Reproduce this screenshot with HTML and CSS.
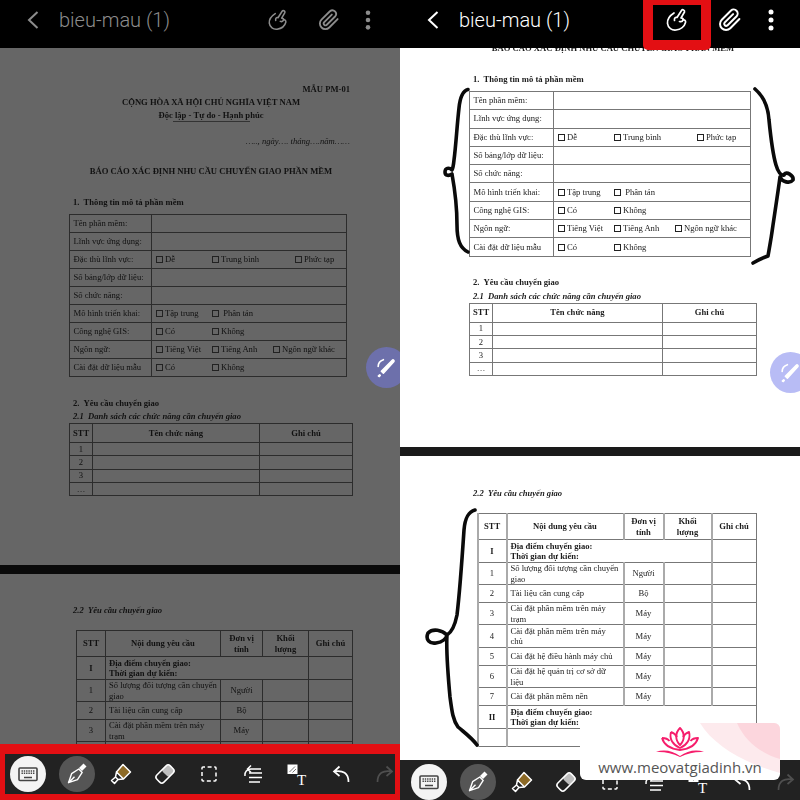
FILE: index.html
```html
<!DOCTYPE html>
<html>
<head>
  <meta charset="utf-8">
  <title>bieu-mau (1)</title>
  <link rel="stylesheet" href="styles.css">
</head>
<body>
  <svg class="sprite">
    <symbol id="i-back" viewBox="0 0 12 20"><path d="M10.5 2 L2 10 L10.5 18" fill="none" stroke="currentColor" stroke-width="2"/></symbol>
    <symbol id="i-hand" viewBox="0 0 24 24">
      <g fill="none" stroke="currentColor" stroke-width="1.7" stroke-linecap="round" stroke-linejoin="round">
        <path d="M9 5 C5 7.500 2 11 2.500 15.500 C3 20 7 22.500 11 22 C15.500 21.500 19.500 18.500 20.500 14.500 C21 12.500 19.500 11.500 18 12"/>
        <path d="M9.500 12.500 C9 10 10.500 9 12 9.500 L16.500 2.500 C17.500 1 20 2 19.500 4 L16 10 C18 10 18.500 11 18 12 C17.500 13.500 16 14 14.500 13.500"/>
      </g>
    </symbol>
    <symbol id="i-clip" viewBox="0 0 24 24"><path d="M21.4 11 L12.3 20.2 A6 6 0 0 1 3.8 11.7 L13 2.5 A4 4 0 0 1 18.6 8.2 L9.4 17.4 A2 2 0 0 1 6.6 14.6 L15.1 6.1" fill="none" stroke="currentColor" stroke-width="2" stroke-linecap="round"/></symbol>
    <symbol id="i-dots" viewBox="0 0 24 24"><circle cx="12" cy="4" r="2.5" fill="currentColor"/><circle cx="12" cy="12" r="2.5" fill="currentColor"/><circle cx="12" cy="20" r="2.5" fill="currentColor"/></symbol>
    <symbol id="i-keyboard" viewBox="0 0 24 24">
      <rect x="3" y="6" width="18" height="12.500" rx="1" fill="none" stroke="#444" stroke-width="1.6"/>
      <path d="M5.500 9 H18.500 M5.500 11.200 H18.500" stroke="#444" stroke-width="1.500" stroke-dasharray="1.400 .9"/>
      <path d="M8 15.500 H16" stroke="#444" stroke-width="1.500"/>
    </symbol>
    <symbol id="i-pen" viewBox="0 0 24 24">
      <path d="M15.500 7.500 L20 3" stroke="#fff" stroke-width="4.200"/>
      <path d="M13.800 7 L17.200 10.400 L12.500 17.600 L3.500 20.700 L6.600 11.700 Z M3.500 20.700 L9.500 14.700" fill="none" stroke="#fff" stroke-width="1.400" stroke-linejoin="round"/>
    </symbol>
    <symbol id="i-marker" viewBox="0 0 24 24">
      <path d="M14 2.500 L21.500 10 L14.500 16.500 L7.500 9.500 Z" fill="#8d6a26"/>
      <path d="M14 2.500 L21.500 10 L14.500 17 L7.500 10 Z M7.500 10 L6.500 15 L9 17.500 L14.500 17 M6.500 15 L2.500 18.500 L5.500 21.500 L9 17.500" fill="none" stroke="#fff" stroke-width="1.500" stroke-linejoin="round"/>
    </symbol>
    <symbol id="i-eraser" viewBox="0 0 24 24">
      <g transform="rotate(-45 12 12)">
        <rect x="12" y="7" width="9.500" height="10" rx="2" fill="#bdbdbd"/>
        <rect x="2.500" y="7" width="19" height="10" rx="3" fill="none" stroke="#fff" stroke-width="1.500"/>
      </g>
    </symbol>
    <symbol id="i-select" viewBox="0 0 24 24"><rect x="5" y="5" width="14" height="14" rx="1" fill="none" stroke="#fff" stroke-width="1.500" stroke-dasharray="4 2.600" stroke-dashoffset="2"/></symbol>
    <symbol id="i-align" viewBox="0 0 24 24">
      <path d="M8 11 H21 M8 15.500 H21 M8 20 H19" stroke="#fff" stroke-width="1.500"/>
      <path d="M4 14 C3.500 10 6 7 10 7 H20 M10 3.500 L6.500 7 L10 10.500" fill="none" stroke="#fff" stroke-width="1.500"/>
    </symbol>
    <symbol id="i-imgtext" viewBox="0 0 24 24">
      <rect x="2.500" y="2.500" width="10" height="9.500" fill="#fff"/>
      <path d="M4.500 10 L10 4.500 M7.500 10.500 L11 7" stroke="#777" stroke-width="1"/>
      <text x="12" y="22.500" class="icon-t">T</text>
    </symbol>
    <symbol id="i-undo" viewBox="0 0 24 24"><path d="M10.500 4.500 L5 9.500 L10.500 14 M5 9.500 C14 8 19.500 11 19.500 20" fill="none" stroke="currentColor" stroke-width="1.700"/></symbol>
    <symbol id="i-redo" viewBox="0 0 24 24"><path d="M13.500 4.500 L19 9.500 L13.500 14 M19 9.500 C10 8 4.500 11 4.500 20" fill="none" stroke="currentColor" stroke-width="1.700"/></symbol>
    <symbol id="i-sketch" viewBox="0 0 24 24">
      <path d="M9 17.500 L7 15.500 L17.500 5 C18.500 4 20 5.500 19 6.500 Z" fill="#fff" stroke="#fff" stroke-width="1.400" stroke-linejoin="round"/>
      <path d="M5.500 19.500 L4 21" stroke="#fff" stroke-width="2.400" stroke-linecap="round"/>
      <path d="M4 11 C4 8 6 5.500 9 4.500" fill="none" stroke="#fff" stroke-width="1.600" stroke-linecap="round"/>
    </symbol>
  </svg>

  <div class="screen">
    <!-- left phone: document dimmed -->
    <div class="pane pane-dim">
      <div class="topbar">
        <svg class="back"><use href="#i-back"/></svg>
        <span class="doc-title">bieu-mau (1)</span>
        <div class="actions">
          <svg class="action"><use href="#i-hand"/></svg>
          <svg class="action"><use href="#i-clip"/></svg>
          <svg class="action"><use href="#i-dots"/></svg>
        </div>
      </div>
      <div class="doc">
        <div class="page page-one">
          <p class="form-code">MẪU PM-01</p>
          <p class="nation">CỘNG HÒA XÃ HỘI CHỦ NGHĨA VIỆT NAM</p>
          <p class="motto">Độc lập - Tự do - Hạnh phúc</p>
          <div class="motto-line"></div>
          <p class="date">….., ngày…. tháng….năm……</p>
          <p class="report-title">BÁO CÁO XÁC ĐỊNH NHU CẦU CHUYỂN GIAO PHẦN MỀM</p>
          <p class="section section-first">1.&nbsp; Thông tin mô tả phần mềm</p>
          <table class="info-table">
            <col class="info-a"><col>
            <tr><td>Tên phần mềm:</td><td></td></tr>
            <tr><td>Lĩnh vực ứng dụng:</td><td></td></tr>
            <tr><td>Đặc thù lĩnh vực:</td><td><div class="opts"><span class="opt"><i class="box"></i>Dễ</span><span class="opt opt-wide"><i class="box"></i>Trung bình</span><span class="opt"><i class="box"></i>Phức tạp</span></div></td></tr>
            <tr><td>Số bảng/lớp dữ liệu:</td><td></td></tr>
            <tr><td>Số chức năng:</td><td></td></tr>
            <tr><td>Mô hình triển khai:</td><td><div class="opts"><span class="opt"><i class="box"></i>Tập trung</span><span class="opt"><i class="box"></i>&nbsp;Phân tán</span></div></td></tr>
            <tr><td>Công nghệ GIS:</td><td><div class="opts"><span class="opt"><i class="box"></i>Có</span><span class="opt"><i class="box"></i>Không</span></div></td></tr>
            <tr><td>Ngôn ngữ:</td><td><div class="opts"><span class="opt"><i class="box"></i>Tiếng Việt</span><span class="opt opt-lang"><i class="box"></i>Tiếng Anh</span><span class="opt"><i class="box"></i>Ngôn ngữ khác</span></div></td></tr>
            <tr><td>Cài đặt dữ liệu mẫu</td><td><div class="opts"><span class="opt"><i class="box"></i>Có</span><span class="opt"><i class="box"></i>Không</span></div></td></tr>
          </table>
          <p class="section section-second">2.&nbsp; Yêu cầu chuyển giao</p>
          <p class="subsection">2.1&nbsp; Danh sách các chức năng cần chuyển giao</p>
          <table class="func-table">
            <col class="func-a"><col class="func-b"><col>
            <tr class="head"><th>STT</th><th>Tên chức năng</th><th>Ghi chú</th></tr>
            <tr><td class="mid">1</td><td></td><td></td></tr>
            <tr><td class="mid">2</td><td></td><td></td></tr>
            <tr><td class="mid">3</td><td></td><td></td></tr>
            <tr><td class="mid">…</td><td></td><td></td></tr>
          </table>
        </div>
        <div class="page-gap"></div>
        <div class="page page-two">
          <p class="subsection">2.2&nbsp; Yêu cầu chuyển giao</p>
          <table class="req-table">
            <col class="req-a"><col class="req-b"><col class="req-c"><col class="req-d"><col>
            <tr class="r26"><th>STT</th><th>Nội dung yêu cầu</th><th>Đơn vị<br>tính</th><th>Khối<br>lượng</th><th>Ghi chú</th></tr>
            <tr class="r23"><th>I</th><th class="left" colspan="3">Địa điểm chuyển giao:<br>Thời gian dự kiến:</th><td></td></tr>
            <tr class="r22"><td class="mid">1</td><td>Số lượng đối tượng cần chuyển giao</td><td class="mid">Người</td><td></td><td></td></tr>
            <tr class="r18"><td class="mid">2</td><td>Tài liệu cần cung cấp</td><td class="mid">Bộ</td><td></td><td></td></tr>
            <tr class="r22"><td class="mid">3</td><td>Cài đặt phần mềm trên máy trạm</td><td class="mid">Máy</td><td></td><td></td></tr>
            <tr class="r23"><td class="mid">4</td><td>Cài đặt phần mềm trên máy chủ</td><td class="mid">Máy</td><td></td><td></td></tr>
          </table>
        </div>
      </div>
      <svg class="fab"><use href="#i-sketch"/></svg>
      <div class="toolbar">
        <span class="tool tool-keys"><svg><use href="#i-keyboard"/></svg></span>
        <span class="tool tool-on"><svg><use href="#i-pen"/></svg></span>
        <span class="tool"><svg><use href="#i-marker"/></svg></span>
        <span class="tool"><svg><use href="#i-eraser"/></svg></span>
        <span class="tool"><svg><use href="#i-select"/></svg></span>
        <span class="tool"><svg><use href="#i-align"/></svg></span>
        <span class="tool"><svg><use href="#i-imgtext"/></svg></span>
        <span class="tool"><svg><use href="#i-undo"/></svg></span>
        <span class="tool tool-off"><svg><use href="#i-redo"/></svg></span>
      </div>
    </div>

    <!-- right phone: document with pen marks -->
    <div class="pane pane-live">
      <div class="topbar">
        <svg class="back"><use href="#i-back"/></svg>
        <span class="doc-title">bieu-mau (1)</span>
        <div class="actions">
          <svg class="action"><use href="#i-hand"/></svg>
          <svg class="action"><use href="#i-clip"/></svg>
          <svg class="action"><use href="#i-dots"/></svg>
        </div>
      </div>
      <div class="doc">
        <div class="page page-one">
          <p class="report-title">BÁO CÁO XÁC ĐỊNH NHU CẦU CHUYỂN GIAO PHẦN MỀM</p>
          <p class="section section-first">1.&nbsp; Thông tin mô tả phần mềm</p>
          <table class="info-table">
            <col class="info-a"><col>
            <tr><td>Tên phần mềm:</td><td></td></tr>
            <tr><td>Lĩnh vực ứng dụng:</td><td></td></tr>
            <tr><td>Đặc thù lĩnh vực:</td><td><div class="opts"><span class="opt"><i class="box"></i>Dễ</span><span class="opt opt-wide"><i class="box"></i>Trung bình</span><span class="opt"><i class="box"></i>Phức tạp</span></div></td></tr>
            <tr><td>Số bảng/lớp dữ liệu:</td><td></td></tr>
            <tr><td>Số chức năng:</td><td></td></tr>
            <tr><td>Mô hình triển khai:</td><td><div class="opts"><span class="opt"><i class="box"></i>Tập trung</span><span class="opt"><i class="box"></i>&nbsp;Phân tán</span></div></td></tr>
            <tr><td>Công nghệ GIS:</td><td><div class="opts"><span class="opt"><i class="box"></i>Có</span><span class="opt"><i class="box"></i>Không</span></div></td></tr>
            <tr><td>Ngôn ngữ:</td><td><div class="opts"><span class="opt"><i class="box"></i>Tiếng Việt</span><span class="opt opt-lang"><i class="box"></i>Tiếng Anh</span><span class="opt"><i class="box"></i>Ngôn ngữ khác</span></div></td></tr>
            <tr><td>Cài đặt dữ liệu mẫu</td><td><div class="opts"><span class="opt"><i class="box"></i>Có</span><span class="opt"><i class="box"></i>Không</span></div></td></tr>
          </table>
          <p class="section section-second">2.&nbsp; Yêu cầu chuyển giao</p>
          <p class="subsection">2.1&nbsp; Danh sách các chức năng cần chuyển giao</p>
          <table class="func-table">
            <col class="func-a"><col class="func-b"><col>
            <tr class="head"><th>STT</th><th>Tên chức năng</th><th>Ghi chú</th></tr>
            <tr><td class="mid">1</td><td></td><td></td></tr>
            <tr><td class="mid">2</td><td></td><td></td></tr>
            <tr><td class="mid">3</td><td></td><td></td></tr>
            <tr><td class="mid">…</td><td></td><td></td></tr>
          </table>
        </div>
        <div class="page-gap"></div>
        <div class="page page-two">
          <p class="subsection">2.2&nbsp; Yêu cầu chuyển giao</p>
          <table class="req-table">
            <col class="req-a"><col class="req-b"><col class="req-c"><col class="req-d"><col>
            <tr class="r26"><th>STT</th><th>Nội dung yêu cầu</th><th>Đơn vị<br>tính</th><th>Khối<br>lượng</th><th>Ghi chú</th></tr>
            <tr class="r23"><th>I</th><th class="left" colspan="3">Địa điểm chuyển giao:<br>Thời gian dự kiến:</th><td></td></tr>
            <tr class="r22"><td class="mid">1</td><td>Số lượng đối tượng cần chuyển giao</td><td class="mid">Người</td><td></td><td></td></tr>
            <tr class="r18"><td class="mid">2</td><td>Tài liệu cần cung cấp</td><td class="mid">Bộ</td><td></td><td></td></tr>
            <tr class="r22"><td class="mid">3</td><td>Cài đặt phần mềm trên máy trạm</td><td class="mid">Máy</td><td></td><td></td></tr>
            <tr class="r23"><td class="mid">4</td><td>Cài đặt phần mềm trên máy chủ</td><td class="mid">Máy</td><td></td><td></td></tr>
            <tr class="r18"><td class="mid">5</td><td>Cài đặt hệ điều hành máy chủ</td><td class="mid">Máy</td><td></td><td></td></tr>
            <tr class="r22"><td class="mid">6</td><td>Cài đặt hệ quản trị cơ sở dữ liệu</td><td class="mid">Máy</td><td></td><td></td></tr>
            <tr class="r18"><td class="mid">7</td><td>Cài đặt phần mềm nền</td><td class="mid">Máy</td><td></td><td></td></tr>
            <tr class="r23"><th>II</th><th class="left" colspan="4">Địa điểm chuyển giao:<br>Thời gian dự kiến:</th></tr>
            <tr class="r18"><td></td><td colspan="4"></td></tr>
          </table>
        </div>
      </div>
      <svg class="marks" viewBox="0 0 400 800">
        <path d="M68 89.500 C62 91 60 98 59 108 C57 125 56 145 54 160 C53.500 165 53 168 52 170 C49 167 45 168 45 172 C45 176 49 176 52 174 C54 185 57 205 57 225 C57 240 60 248 68 252"/>
        <path d="M355 89 C362 95 368 105 369 120 C371 140 373 155 376 165 C378 172 381 176 384 175 C386 170 394 176 393 180 C390 184 382 182 380 177 C379 185 376 205 373 225 C371 240 369 250 368 256 C362 258 358 260 353 263"/>
        <path d="M75 510 C68 512 65 518 64 530 C62 560 60 590 57 615 C55 625 52 632 47 635 C42 630 33 628 28 633 C25 640 30 644 36 643 C42 642 46 640 47 635 C46 650 48 675 50 697 C52 712 53 720 58 727 C65 733 72 738 77 745"/>
      </svg>
      <svg class="fab"><use href="#i-sketch"/></svg>
      <div class="toolbar">
        <span class="tool tool-keys"><svg><use href="#i-keyboard"/></svg></span>
        <span class="tool tool-on"><svg><use href="#i-pen"/></svg></span>
        <span class="tool"><svg><use href="#i-marker"/></svg></span>
        <span class="tool"><svg><use href="#i-eraser"/></svg></span>
        <span class="tool"><svg><use href="#i-select"/></svg></span>
        <span class="tool"><svg><use href="#i-align"/></svg></span>
        <span class="tool"><svg><use href="#i-imgtext"/></svg></span>
        <span class="tool"><svg><use href="#i-undo"/></svg></span>
        <span class="tool tool-off"><svg><use href="#i-redo"/></svg></span>
      </div>
      <div class="watermark">
        <svg class="wm-arcs" viewBox="0 0 200 57">
          <path d="M120 0 H200 V50 C170 42 135 25 120 0 Z" fill="#fdeaed"/>
          <path d="M157 0 H200 V36 C180 30 165 18 157 0 Z" fill="#fcd6dd"/>
        </svg>
        <svg class="lotus" viewBox="0 0 48 30">
          <g fill="none" stroke="#f61e6c" stroke-width="1.900" stroke-linejoin="round">
            <path d="M24 1 C19 6 19 13 24 18 C29 13 29 6 24 1 Z"/>
            <path d="M15 5 C13 12 17 18 24 21 C31 18 35 12 33 5 C30 6 28 8 27 10 M15 5 C18 6 20 8 21 10"/>
            <path d="M6 11 C8 18 15 22 24 23 C33 22 40 18 42 11 C39 11 36 12 34.500 14 M6 11 C9 11 12 12 13.500 14"/>
          </g>
          <path d="M0 25 C8 22 17 24 24 29 C31 24 40 22 48 25 C40 24.500 32 26 24 30 C16 26 8 24.500 0 25 Z" fill="#f61e6c"/>
        </svg>
        <span class="wm-text">www.meovatgiadinh.vn</span>
      </div>
      <div class="call-out"></div>
    </div>
  </div>
</body>
</html>
```

FILE: styles.css
```css
body {
  margin: 0;
  background-color: #000;
  font-family: "Liberation Serif", serif;
}

p {
  margin: 0;
}

.sprite {
  display: none;
}

.screen {
  display: flex;
  width: 800px;
  height: 800px;
  overflow: hidden;
}

.pane {
  position: relative;
  display: flex;
  flex-direction: column;
  width: 400px;
  height: 800px;
  overflow: hidden;
}

/* top bar */
.topbar {
  display: flex;
  align-items: center;
  flex: none;
  height: 48px;
  padding: 0 17px 8px 27px;
  box-sizing: border-box;
  background-color: #000;
  color: #fff;
}

.back {
  width: 12px;
  height: 20px;
}

.doc-title {
  margin-left: 20px;
  font-family: Roboto, sans-serif;
  font-size: 20px;
  font-weight: 300;
  white-space: nowrap;
}

.actions {
  display: flex;
  gap: 29px;
  margin-left: auto;
}

.action {
  width: 24px;
  height: 24px;
}

.action:last-child {
  margin-left: -12px;
}

.pane-dim .topbar {
  padding-right: 21px;
  color: #8c8c8c;
}

.pane-dim .action {
  width: 22px;
}

/* document */
.doc {
  flex: 1;
  overflow: hidden;
  background-color: #fff;
  color: #1c1c1c;
  font-size: 8.600px;
}

.page {
  box-sizing: border-box;
  overflow: hidden;
  padding-left: 69px;
  padding-right: 47px;
  filter: blur(0.400px);
}

.page-gap {
  height: 9px;
  background-color: #1a1a1a;
}

.pane-dim .doc {
  background-color: #666;
  color: #111;
}

.pane-dim .page-gap {
  background-color: #0a0a0a;
}

.pane-dim .page-one {
  height: 517px;
  padding-top: 35px;
}

.pane-live .page-one {
  height: 399px;
}

.page-two {
  padding-top: 30px;
}

.form-code,
.date {
  padding-right: 3px;
  text-align: right;
  line-height: 13px;
}

.form-code,
.nation,
.motto {
  font-weight: bold;
  line-height: 13px;
}

.nation,
.motto {
  text-align: center;
}

.motto-line {
  width: 77px;
  height: 1px;
  margin: -1px auto 0;
  background-color: #333;
}

.date {
  margin-top: 13px;
  font-style: italic;
}

.report-title {
  margin-top: 16px;
  text-align: center;
  font-weight: bold;
  line-height: 14px;
}

.pane-live .report-title {
  margin-top: -7px;
  padding-left: 4px;
}

.section {
  font-weight: bold;
  line-height: 14px;
  padding-left: 4px;
}

.section-first {
  margin-top: 17px;
}

.section-second {
  margin-top: 19px;
}

.pane-live .section-second {
  margin-top: 18px;
}

.subsection {
  padding-left: 4px;
  font-weight: bold;
  font-style: italic;
  line-height: 13px;
}

.pane-live .subsection {
  line-height: 14px;
}

/* tables */
table {
  border-collapse: collapse;
  table-layout: fixed;
}

td,
th {
  padding: 0 3.500px;
  border: 1px solid #777;
  line-height: 11px;
  text-align: left;
  overflow: hidden;
}

.pane-dim td,
.pane-dim th {
  border-color: #2c2c2c;
}

.info-table {
  width: 278px;
  margin-top: 5px;
}

.info-table tr {
  height: 18px;
}

.pane-live .info-table {
  width: 282px;
}

.pane-live .info-table tr {
  height: 18.300px;
}

.info-a {
  width: 82px;
}

.pane-live .info-a {
  width: 84px;
}

.opts {
  display: flex;
  white-space: nowrap;
}

.opt {
  flex: none;
  width: 56px;
}

.opt-wide {
  width: 83px;
}

.opt-lang {
  width: 61px;
}

.box {
  display: inline-block;
  width: 5px;
  height: 5px;
  margin-right: 2.500px;
  border: 1px solid #222;
  vertical-align: -1px;
}

.func-table {
  width: 284px;
}

.func-table tr {
  height: 13.300px;
}

.func-table tr.head {
  height: 19px;
}

.pane-live .func-table {
  width: 288px;
}

.func-a {
  width: 23px;
}

.func-b {
  width: 167px;
}

.pane-live .func-b {
  width: 170px;
}

.func-table th,
.mid {
  text-align: center;
  padding: 0;
}

.req-table {
  width: 277px;
  margin-top: 13px;
  margin-left: 7px;
}

.req-table td,
.req-table th {
  line-height: 10.500px;
}

.pane-live .req-table {
  width: 280px;
  margin-left: 7.500px;
}

.req-a {
  width: 29px;
}

.req-b {
  width: 115px;
}

.req-c {
  width: 42px;
}

.req-d {
  width: 46px;
}

.pane-live .req-b {
  width: 117px;
}

.pane-live .req-c {
  width: 40px;
}

.pane-live .req-d {
  width: 48px;
}

.req-table th {
  padding: 0;
  text-align: center;
}

.req-table th.left {
  padding-left: 3px;
  text-align: left;
}

.req-table td {
  padding: 0 3px;
}

.req-table td.mid {
  padding: 0;
}

.pane-live .req-table td,
.pane-live .req-table th {
  border-left-width: 2px;
  border-left-color: #aaa;
}

.r18 {
  height: 18px;
}

.r22 {
  height: 22px;
}

.r23 {
  height: 23px;
}

.r26 {
  height: 26px;
}

/* bottom tools */
.toolbar {
  display: flex;
  align-items: center;
  flex: none;
  box-sizing: border-box;
  background-color: #222;
  color: #fff;
}

.pane-dim .toolbar {
  height: 56px;
  padding-left: 1px;
  border: solid #e30f13;
  border-width: 10px 5px 6px;
}

.pane-live .toolbar {
  height: 40px;
  padding: 4px 0 0 7px;
}

.tool {
  display: flex;
  align-items: center;
  justify-content: center;
  flex: none;
  width: 44px;
  height: 36px;
}

.tool svg {
  position: relative;
  width: 24px;
  height: 24px;
  overflow: visible;
}

.tool-keys {
  margin-right: 5px;
}

.tool-keys::before,
.tool-on::before {
  content: "";
  position: absolute;
  width: 36px;
  height: 36px;
  border-radius: 50%;
  background-color: #f4f4f4;
}

.tool-on::before {
  background-color: #555;
}

.tool-off {
  color: #4f4f4f;
}

.icon-t {
  font-family: "Liberation Serif", serif;
  font-size: 15px;
  fill: #fff;
}

/* floating pen button */
.fab {
  position: absolute;
  top: 352px;
  left: 370px;
  width: 41px;
  height: 41px;
  padding: 8px;
  box-sizing: border-box;
  border-radius: 50%;
  background-color: #b8bcf5;
}

.pane-dim .fab {
  top: 347px;
  left: 366px;
  background-color: #6d70ab;
}

/* pen marks over the page */
.marks {
  position: absolute;
  top: 0;
  left: 0;
  width: 400px;
  height: 800px;
}

.marks path {
  fill: none;
  stroke: #0a0a0a;
  stroke-width: 3.600;
  stroke-linecap: round;
  stroke-linejoin: round;
}

/* red box round the hand button */
.call-out {
  position: absolute;
  top: 0;
  left: 243px;
  width: 48px;
  height: 35px;
  border: solid #e30f13;
  border-width: 5px 10px 10px;
  border-radius: 0 0 5px 5px;
}

/* site watermark */
.watermark {
  position: absolute;
  top: 723px;
  left: 180px;
  display: flex;
  flex-direction: column;
  align-items: center;
  width: 200px;
  height: 57px;
  padding-top: 4px;
  box-sizing: border-box;
  overflow: hidden;
  background-color: #fff;
  border-radius: 0 6px 6px 6px;
}

.wm-arcs {
  position: absolute;
  top: 0;
  left: 0;
  width: 200px;
  height: 57px;
}

.lotus {
  position: relative;
  flex: none;
  width: 48px;
  height: 30px;
}

.wm-text {
  position: relative;
  font-family: "Open Sans", sans-serif;
  font-size: 15px;
  line-height: 20px;
  color: #555;
  white-space: nowrap;
}
```
